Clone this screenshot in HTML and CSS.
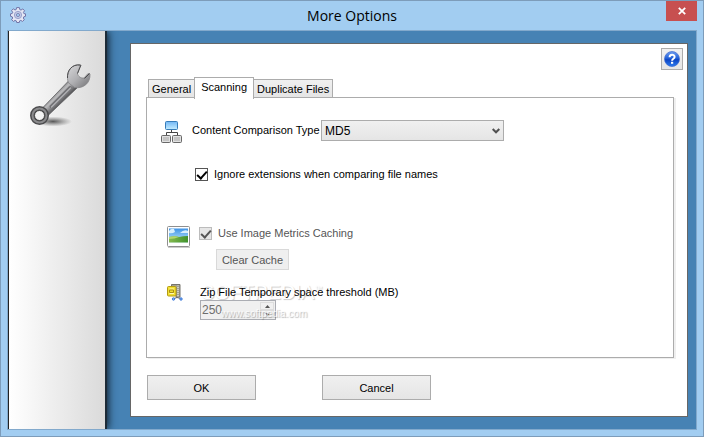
FILE: index.html
```html
<!DOCTYPE html>
<html lang="en">
<head>
<meta charset="utf-8">
<title>More Options</title>
<link rel="stylesheet" href="styles.css">
</head>
<body>
<div class="window">
  <header class="titlebar">
    <svg class="gear" viewBox="0 0 16 16" aria-hidden="true">
      <g fill="#e4e6f4" stroke="#7174a8" stroke-width="1">
        <path d="M6.6 .6h2.8l.4 2 1.2.5 1.8-1.2 1.7 1.8-1.1 1.8.5 1.1 1.6.2v2.5l-1.7.5-.5 1.2 1 1.7-1.8 1.7-1.7-1-1.2.5-.3 1.6H6.7l-.4-1.6-1.2-.5-1.7 1-1.8-1.7 1.1-1.7-.5-1.2-1.7-.5V6.8l1.7-.3.5-1.2-1.1-1.7 1.7-1.8L5 3l1.2-.5z"/>
        <circle cx="8" cy="8" r="3.6" fill="#c5cee9" stroke="#9aa0cc"/>
        <circle cx="8" cy="8" r="1.6" fill="#a5cff2" stroke="#8388b9"/>
      </g>
    </svg>
    <h1 class="title">More Options</h1>
    <button class="close" aria-label="Close"><svg viewBox="0 0 8 8" aria-hidden="true"><path d="M.8 .8l6.400 6.400M7.200 .8L.8 7.200" stroke="#fff" stroke-width="1.800"/></svg></button>
  </header>
  <div class="client">
    <aside class="sidebar">
      <svg class="wrench" viewBox="0 0 64 66" aria-hidden="true">
        <defs>
          <linearGradient id="steel" x1="0" y1="0" x2="1" y2="1"><stop offset="0" stop-color="#d8d8da"/><stop offset=".5" stop-color="#b0b0b3"/><stop offset="1" stop-color="#707073"/></linearGradient>
          <linearGradient id="shaft" gradientUnits="userSpaceOnUse" x1="25" y1="30" x2="34" y2="39"><stop offset="0" stop-color="#707072"/><stop offset=".35" stop-color="#bcbcbe"/><stop offset=".6" stop-color="#909093"/><stop offset="1" stop-color="#505052"/></linearGradient>
          <radialGradient id="shade"><stop offset="0" stop-color="#333" stop-opacity=".8"/><stop offset="1" stop-color="#555" stop-opacity="0"/></radialGradient>
        </defs>
        <ellipse cx="24" cy="58.500" rx="19" ry="5" fill="url(#shade)"/>
        <path d="M12.500 46L40 17.500l8 7.500L18.500 53z" fill="url(#shaft)" stroke="#606062" stroke-width=".8"/>
        <path d="M22 43.500L41 24.500" stroke="#707073" stroke-width="3" stroke-linecap="round"/>
        <path d="M22.500 44L41.500 25" stroke="#b4b4b7" stroke-width="1.200" stroke-linecap="round"/>
        <path d="M51.500 2C43 .8 38 7.500 38.500 15.500c.2 3 1 4.500 2.500 5.500l4.500 3.500c9 1.500 16-4.500 15.500-13.500l-2-.5-4 4.500c-3 .5-6-1.500-6.500-4.500z" fill="url(#steel)" stroke="#858588" stroke-width=".8"/>
        <path d="M51.500 2C43 .8 38 7.500 38.500 15M52 2l-3.500 8.500M60.500 10.500l-5 5" fill="none" stroke="#4b4b4d" stroke-width="1"/>
        <circle cx="10.500" cy="52.500" r="7" fill="none" stroke="#4b4b4d" stroke-width="5"/>
        <circle cx="10.500" cy="52.500" r="7" fill="none" stroke="#8b8b8d" stroke-width="2"/>
        <circle cx="10.500" cy="52.500" r="5" fill="#f4f4f4" stroke="#444" stroke-width="1"/>
      </svg>
    </aside>
    <main class="panel">
      <div class="helprow">
        <button class="help" aria-label="Help">
          <svg viewBox="0 0 16 16" aria-hidden="true">
            <defs><linearGradient id="ball" x2="0" y2="1"><stop offset="0" stop-color="#6d9df0"/><stop offset=".45" stop-color="#2160d8"/><stop offset=".55" stop-color="#0b43c2"/><stop offset="1" stop-color="#2c7cf0"/></linearGradient></defs>
            <circle cx="8" cy="8" r="7.500" fill="url(#ball)" stroke="#3d68cf" stroke-width=".7"/>
            <path d="M5.600 6.300C5.600 3 10.600 3 10.600 6c0 1.800-2.500 1.700-2.500 3.700" fill="none" stroke="#fff" stroke-width="2"/>
            <path d="M7 10.800h2.200v2H7z" fill="#fff"/>
          </svg>
        </button>
      </div>
      <div class="tabs" role="tablist">
        <button class="tab" role="tab">General</button>
        <button class="tab selected" role="tab" aria-selected="true">Scanning</button>
        <button class="tab" role="tab">Duplicate Files</button>
      </div>
      <section class="page">
        <div class="row compare">
          <svg class="icon network" viewBox="0 0 22 23" aria-hidden="true">
            <defs><linearGradient id="sky" x2="0" y2="1"><stop offset="0" stop-color="#71b6f4"/><stop offset="1" stop-color="#c5edff"/></linearGradient></defs>
            <path d="M10.500 9v3M5.500 15v-3.500h11V15" fill="none" stroke="#444"/>
            <rect x="4.500" y=".5" width="12" height="8" rx="1" fill="url(#sky)" stroke="#367cb9"/>
            <g fill="#c4c4c4" stroke="#686868"><rect x=".5" y="14.500" width="9" height="7" rx="1"/><rect x="11.500" y="14.500" width="9" height="7" rx="1"/></g>
            <g fill="none" stroke="#e2e2e2"><path d="M1.500 15.500h7v5h-7zM12.500 15.500h7v5h-7z"/></g>
          </svg>
          <label for="type">Content Comparison Type</label>
          <div class="combo">
            <select id="type"><option>MD5</option></select>
            <svg class="arrow" viewBox="0 0 8 6" aria-hidden="true"><path d="M.7 1L4 4.300 7.300 1" fill="none" stroke="#505050" stroke-width="2"/></svg>
          </div>
        </div>
        <label class="check ignore"><input type="checkbox" checked>Ignore extensions when comparing file names</label>
        <div class="row metrics">
          <svg class="icon photo" viewBox="0 0 24 22" aria-hidden="true">
            <defs><linearGradient id="day" x2="0" y2="1"><stop offset="0" stop-color="#3d92e6"/><stop offset="1" stop-color="#c6eeff"/></linearGradient><linearGradient id="hill" x2="1" y2="0"><stop offset="0" stop-color="#86ba4f"/><stop offset="1" stop-color="#3f912b"/></linearGradient></defs>
            <rect x=".5" y=".5" width="22" height="20" rx="1" fill="#fff" stroke="#8f8f8f"/>
            <path d="M1 21.500h22" stroke="#ccc"/>
            <path d="M2 2.500h19v14H2z" fill="url(#day)"/>
            <path d="M2 5q2-3 5-2l1 3q-3 2-6 1zM13 7q4-4 8-2v2z" fill="#d8effd"/>
            <path d="M2 11q6-1.500 10 0 4-1 9-1v6.500H2z" fill="url(#hill)"/>
            <path d="M2 11q6-1.500 10 0-4 2-10 2z" fill="#b3d66d"/>
          </svg>
          <div class="stack">
            <label class="check disabled"><input type="checkbox" checked disabled>Use Image Metrics Caching</label>
            <button class="button clear" disabled>Clear Cache</button>
          </div>
        </div>
        <div class="row zip">
          <svg class="icon archive" viewBox="0 0 16 17" aria-hidden="true">
            <path d="M4.500 2V.5h8.500v12.500H9V3" fill="#a5a290" stroke="#77756c"/>
            <path d="M11 1.500v12" stroke="#d0cfc6" stroke-width="2"/>
            <path d="M11 2v11" stroke="#77756c" stroke-dasharray="1 1"/>
            <rect x=".5" y="2.500" width="8.500" height="9.500" rx="1" fill="#f2e032" stroke="#b49b13"/>
            <path d="M2.500 5h4.500M2.500 9.500h4.500" stroke="#fffab5"/>
            <path d="M2.500 6h4v2.500h-4z" fill="none" stroke="#a98f16"/>
            <path d="M7 14.500l3-1 4 1" fill="none" stroke="#666"/>
            <g fill="#8fb9f2" stroke="#3b78d8"><circle cx="6.500" cy="15" r="1.200"/><circle cx="14" cy="15" r="1.200"/></g>
          </svg>
          <div class="stack">
            <div class="brand">SOFTPEDIA<sup>™</sup></div>
            <label for="threshold">Zip File Temporary space threshold (MB)</label>
            <div class="spinner">
              <input id="threshold" type="text" value="250" disabled>
              <div class="steps">
                <button aria-label="Increase" disabled><svg viewBox="0 0 5 3" aria-hidden="true"><path d="M0 3L2.500 0 5 3z" fill="#555"/></svg></button>
                <button aria-label="Decrease" disabled><svg viewBox="0 0 5 3" aria-hidden="true"><path d="M0 0L2.500 3 5 0z" fill="#555"/></svg></button>
              </div>
            </div>
            <div class="site">www.softpedia.com</div>
          </div>
        </div>
      </section>
      <footer class="actions">
        <button class="button">OK</button>
        <button class="button">Cancel</button>
      </footer>
    </main>
  </div>
</div>
</body>
</html>
```
FILE: styles.css
```css
* { box-sizing: border-box; }
body { margin: 0; font: 11px/16px "Liberation Sans", Arial, sans-serif; color: #000; }
button, input, select { font: inherit; color: inherit; margin: 0; padding: 0; border-radius: 0; }
svg { display: block; flex: none; }

.window {
  display: flex;
  flex-direction: column;
  min-height: 100vh;
  padding: 0 6px 6px;
  background: #a2cdf1;
  border: 1px solid #7d9cba;
}
.titlebar {
  display: grid;
  grid-template-columns: 46px 1fr 46px;
  height: 29px;
}
.gear { width: 16px; height: 16px; margin: 6px 0 0 3px; }
.title { margin: 0; font: 14px/29px "Open Sans", sans-serif; text-align: center; }
.close {
  display: grid;
  place-items: center;
  width: 31px;
  height: 20px;
  margin-left: 15px;
  border: 0;
  background: #c75050;
}
.close svg { width: 8px; height: 8px; }

.client {
  display: flex;
  flex: 1;
  border: 1px solid #82a9cc;
  background: #4682b4;
}
.sidebar {
  flex: none;
  width: 97px;
  padding: 32px 0 0 20px;
  border-left: 1px solid #222;
  background: linear-gradient(90deg, #fff, #f6f6f6 25%, #dadada);
  box-shadow: 2px 0 0 #1c2b38, 3px 0 8px #0b1722;
  clip-path: inset(0 -14px 0 0);
}
.wrench { width: 64px; height: 66px; }

.panel {
  flex: 1;
  margin: 12px 8px 12px 25px;
  padding: 4px 4px 15px 15px;
  border: 1px solid #666;
  background: #fff;
}
.helprow { display: flex; justify-content: flex-end; }
.help {
  display: grid;
  place-items: center;
  width: 22px;
  height: 22px;
  border: 1px solid #acacac;
  background: linear-gradient(#f0f0f0, #e5e5e5);
}
.help svg { width: 16px; height: 16px; }

.tabs { display: flex; align-items: flex-end; height: 28px; padding-left: 2px; }
.tab {
  height: 19px;
  padding: 0 3px;
  border: 1px solid #acacac;
  border-right-width: 0;
  background: linear-gradient(#f0f0f0, #e5e5e5);
  white-space: nowrap;
}
.tab:last-child { border-left-width: 0; border-right-width: 1px; }
.tab.selected {
  z-index: 1;
  height: 22px;
  margin-bottom: -1px;
  padding: 0 6px 3px;
  border-width: 1px 1px 0;
  background: #fff;
}
.page {
  margin: -1px 9px 0 0;
  padding: 22px 14px 37px;
  border: 1px solid #acacac;
  box-shadow: 2px 1px 0 #efefef;
}
.row { display: flex; align-items: flex-start; }
.network { width: 22px; height: 23px; margin-top: 1px; }
.compare label { width: 129px; margin: 2px 0 0 9px; white-space: nowrap; }
.combo { display: grid; align-items: center; }
.combo > * { grid-area: 1 / 1; }
.combo select {
  appearance: none;
  width: 183px;
  height: 21px;
  padding: 0 3px;
  border: 1px solid #acacac;
  background: linear-gradient(#f0f0f0, #e5e5e5);
  font-size: 12px;
}
.arrow { width: 8px; height: 6px; margin-right: 4px; justify-self: end; pointer-events: none; }

.check { display: flex; align-items: center; gap: 6px; }
.check input {
  appearance: none;
  display: grid;
  width: 13px;
  height: 13px;
  border: 1px solid #555;
  background: #fff;
}
.check input::after {
  content: "";
  width: 8px;
  height: 4px;
  margin: 2px 0 0 1px;
  border: solid #000;
  border-width: 0 0 2px 2px;
  transform: rotate(-48deg);
}
.ignore { margin: 22px 0 0 34px; }
.check.disabled { color: #555; }
.check.disabled input { border-color: #bcbcbc; background: #e6e6e6; }
.check.disabled input::after { border-color: #555; }

.metrics { gap: 8px; margin: 43px 0 0 6px; }
.photo { width: 24px; height: 22px; margin-top: 1px; }
.stack { position: relative; isolation: isolate; display: flex; flex-direction: column; align-items: flex-start; }
.button {
  width: 109px;
  height: 25px;
  border: 1px solid #acacac;
  background: linear-gradient(#f0f0f0, #e5e5e5);
}
.clear {
  width: 73px;
  height: 21px;
  margin: 8px 0 0 17px;
  border-color: #d9d9d9;
  background: #efefef;
  color: #555;
}
.zip { gap: 17px; margin: 14px 0 0 6px; }
.archive { width: 16px; height: 17px; }
.spinner {
  display: flex;
  width: 76px;
  height: 20px;
  padding: 1px;
  border: 1px solid #abadb3;
  background: #f0f0f0;
}
.spinner input { flex: 1; min-width: 0; border: 0; background: none; color: #6d6d6d; font-size: 12px; }
.steps { display: flex; flex-direction: column; width: 14px; }
.steps button {
  display: grid;
  place-content: center;
  flex: 1;
  min-height: 0;
  border: 1px solid #ddd;
  background: #f0f0f0;
}
.steps svg { width: 5px; height: 3px; }
.brand, .site { position: absolute; pointer-events: none; white-space: nowrap; }
.brand { z-index: -1; left: 1px; top: -3px; font-size: 20px; line-height: 22px; color: #fff; text-shadow: 1px 1px 1px #ccc; }
.brand sup { font-size: 8px; line-height: 8px; }
.site { left: 21px; top: 23px; font-size: 10px; line-height: 13px; color: rgba(255, 255, 255, .8); text-shadow: 1px 1px 1px rgba(0, 0, 0, .3); }

.actions { display: flex; gap: 66px; margin: 17px 0 0 1px; }
```
